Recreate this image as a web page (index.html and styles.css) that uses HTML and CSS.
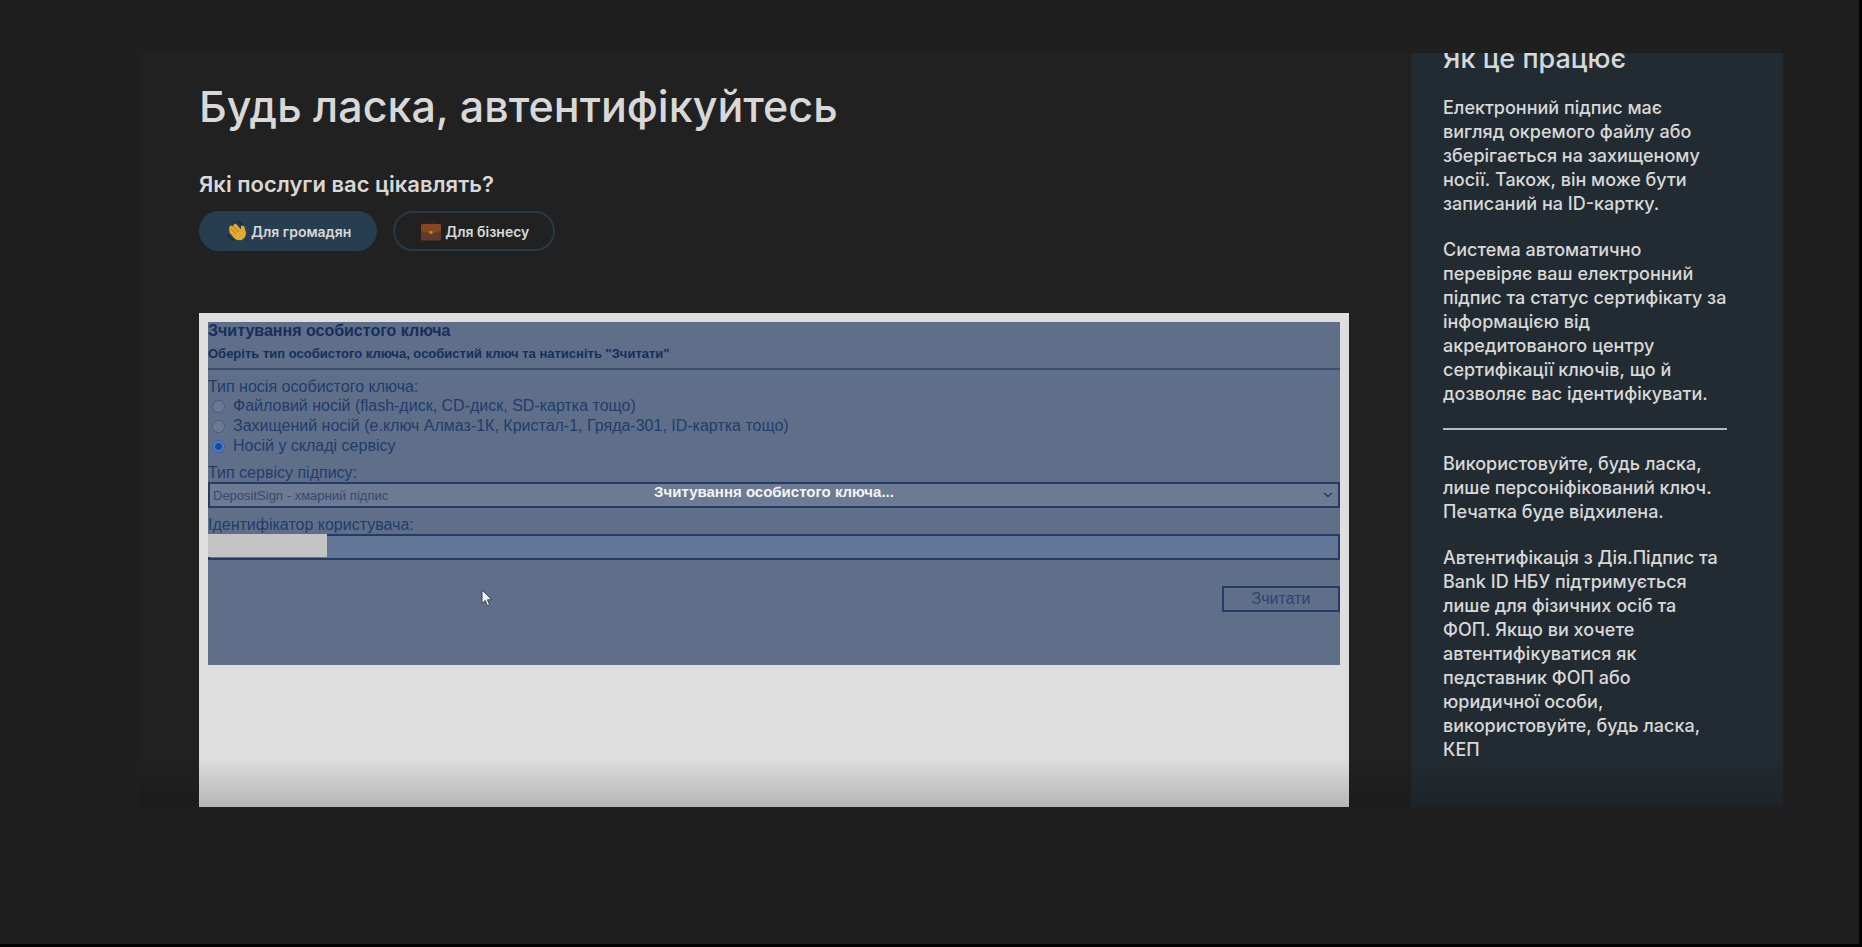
FILE: index.html
```html
<!DOCTYPE html>
<html lang="uk">
<head>
<meta charset="utf-8">
<title>Будь ласка, автентифікуйтесь</title>
<link rel="stylesheet" href="styles.css">
</head>
<body>
<div class="stage">
  <main class="main">
    <h1 class="title">Будь ласка, автентифікуйтесь</h1>
    <h2 class="question">Які послуги вас цікавлять?</h2>
    <div class="pills">
      <button class="pill pill-active" type="button">
        <svg class="pill-icon" viewBox="0 0 20 20" aria-hidden="true">
          <path d="M2.500 5.500Q4 3.500 5.500 5.500L7 3.500Q8.500 2 10 4L14 8.500V5.500Q15.500 3.500 17.500 6L19 12Q19 17 14.500 19 10 20 7 17L2.500 11.500Q1.500 8 2.500 5.500Z" fill="#e2ab2d"/>
          <path d="M4 7.500 9 13M6.500 5.500 11.500 11" stroke="#b27a1c" stroke-width="1" fill="none"/>
          <path d="M10.500 1Q14 .8 15.500 3.500M1 14Q2 17.500 6 18.500" stroke="#0e3444" stroke-width="1.800" fill="none" stroke-linecap="round"/>
        </svg>
        <span>Для громадян</span>
      </button>
      <button class="pill" type="button">
        <svg class="pill-icon" viewBox="0 0 20 20" aria-hidden="true">
          <path d="M6.500 4V2Q6.500 1 7.500 1h5q1 0 1 1v2" fill="none" stroke="#3c2219" stroke-width="1.600"/>
          <rect x="0" y="3" width="20" height="16.500" rx="1.500" fill="#5f392b"/>
          <path d="M0 4.500Q0 3 1.500 3h17Q20 3 20 4.500v5q-4 2.500-10 2.500T0 9.500Z" fill="#87471f"/>
          <rect x="8.500" y="10" width="3" height="3" rx="1" fill="#d08a1c"/>
        </svg>
        <span>Для бізнесу</span>
      </button>
    </div>

    <section class="card">
      <form class="panel">
        <h3 class="panel-title">Зчитування особистого ключа</h3>
        <p class="panel-hint">Оберіть тип особистого ключа, особистий ключ та натисніть "Зчитати"</p>
        <fieldset class="group">
          <legend class="label">Тип носія особистого ключа:</legend>
          <label class="option"><input class="radio" type="radio" name="media"><span>Файловий носій (flash-диск, CD-диск, SD-картка тощо)</span></label>
          <label class="option"><input class="radio" type="radio" name="media"><span>Захищений носій (е.ключ Алмаз-1К, Кристал-1, Гряда-301, ID-картка тощо)</span></label>
          <label class="option"><input class="radio" type="radio" name="media" checked><span>Носій у складі сервісу</span></label>
        </fieldset>
        <label class="label" for="service">Тип сервісу підпису:</label>
        <div class="field">
          <select class="control select" id="service"><option>DepositSign - хмарний підпис</option></select>
          <svg class="chevron" viewBox="0 0 10 6" aria-hidden="true"><path d="M1 1 5 4.500 9 1" fill="none" stroke="#2a3d60" stroke-width="1.600"/></svg>
          <strong class="status" role="status">Зчитування особистого ключа...</strong>
        </div>
        <label class="label" for="user">Ідентифікатор користувача:</label>
        <div class="field">
          <input class="control" id="user" type="text">
          <span class="mask"></span>
        </div>
        <button class="submit" type="button">Зчитати</button>
        <svg class="cursor" viewBox="0 0 12 18" aria-hidden="true"><path d="M1 1v13.500l3.200-3 2.200 5.200 2.200-1-2.200-4.900H11Z" fill="#f4f4f6" stroke="#33415c" stroke-width="1"/></svg>
      </form>
    </section>
  </main>

  <aside class="side">
    <h2 class="side-title">Як це працює</h2>
    <p class="side-text">Електронний підпис має<br>вигляд окремого файлу або<br>зберігається на захищеному<br>носії. Також, він може бути<br>записаний на ID-картку.</p>
    <p class="side-text">Система автоматично<br>перевіряє ваш електронний<br>підпис та статус сертифікату за<br>інформацією від<br>акредитованого центру<br>сертифікації ключів, що й<br>дозволяє вас ідентифікувати.</p>
    <hr class="rule">
    <p class="side-text">Використовуйте, будь ласка,<br>лише персоніфікований ключ.<br>Печатка буде відхилена.</p>
    <p class="side-text">Автентифікація з Дія.Підпис та<br>Bank ID НБУ підтримується<br>лише для фізичних осіб та<br>ФОП. Якщо ви хочете<br>автентифікуватися як<br>педставник ФОП або<br>юридичної особи,<br>використовуйте, будь ласка,<br>КЕП</p>
  </aside>
  <div class="shade"></div>
</div>
</body>
</html>
```
FILE: styles.css
```css
* { box-sizing: border-box; }

html { height: 100%; }

body {
  margin: 0;
  height: 100%;
  padding: 53px 76px 137px 139px;
  background: #1f1f1f;
  border-right: 3px solid #030303;
  border-bottom: 3px solid #030303;
  font-family: Inter, "Noto Sans", sans-serif;
  color: #d8d8d8;
  overflow: hidden;
}

h1, h2, h3, p { margin: 0; }

.stage {
  position: relative;
  display: flex;
  height: 100%;
  background: #212121;
  overflow: hidden;
}

.main {
  flex: 1;
  display: flex;
  flex-direction: column;
  padding: 27px 62px 0 60px;
}

.title {
  font-size: 43px;
  line-height: 52px;
  font-weight: 500;
}

.question {
  margin-top: 38px;
  font-size: 22px;
  line-height: 28px;
  font-weight: 600;
}

.pills {
  display: flex;
  gap: 16px;
  margin-top: 13px;
}

.pill {
  display: flex;
  align-items: center;
  gap: 4px;
  height: 40px;
  padding: 0 24px 0 26px;
  border: 2px solid #263a48;
  border-radius: 20px;
  background: transparent;
  color: #d8d8d8;
  font-family: inherit;
  font-size: 14px;
  font-weight: 600;
}

.pill-active { background: #263e4f; border-color: #263e4f; }

.pill-icon { width: 20px; height: 20px; }

.card {
  flex: 1;
  margin-top: 62px;
  padding: 9px 9px 0;
  background: #dedede;
}

.panel {
  position: relative;
  display: flex;
  flex-direction: column;
  height: 343px;
  background: #5f6f89;
  color: #223c69;
  font-family: "Liberation Sans", Arial, sans-serif;
  font-size: 16px;
}

.panel-title {
  font-size: 16px;
  line-height: 18px;
  color: #162e5c;
}

.panel-hint {
  padding: 7px 0;
  border-bottom: 2px solid #3b4f73;
  font-size: 13px;
  line-height: 14px;
  font-weight: 700;
  color: #162e5c;
}

.group {
  margin: 7px 0;
  padding: 0;
  border: 0;
}

.label {
  padding: 0;
  line-height: 19px;
}

.option {
  display: flex;
  align-items: center;
  gap: 8px;
  padding-left: 4px;
  line-height: 20px;
}

.radio {
  appearance: none;
  width: 13px;
  height: 13px;
  margin: 0;
  border: 1px solid #465a80;
  border-radius: 50%;
  background: #6c7a93;
}

.radio:checked {
  border-color: #2b62b5;
  background: radial-gradient(circle, #0b4cae 3px, #5a7cb4 4px);
}

.field { position: relative; display: flex; margin-bottom: 7px; }

.control {
  width: 100%;
  height: 26px;
  padding: 0 3px;
  border: 2px solid #253b66;
  border-radius: 0;
  background: #627696;
  color: #34496f;
  font-family: inherit;
  font-size: 13px;
}

.select { appearance: none; background: #6c7a93; }

.chevron {
  position: absolute;
  right: 7px;
  top: 10px;
  width: 10px;
  height: 6px;
}

.status {
  position: absolute;
  inset: 0;
  font-size: 15px;
  line-height: 20px;
  text-align: center;
  color: #f4f4f6;
}

.mask {
  position: absolute;
  left: 0;
  top: 0;
  width: 119px;
  height: 23px;
  background: #c4c4c4;
}

.submit {
  align-self: flex-end;
  width: 118px;
  height: 26px;
  margin-top: 19px;
  padding: 0;
  border: 2px solid #253b66;
  background: transparent;
  color: #2c4570;
  font-family: inherit;
  font-size: 16px;
}

.cursor {
  position: absolute;
  left: 273px;
  top: 267px;
  width: 12px;
  height: 18px;
}

.side {
  width: 372px;
  padding: 0 56px 0 32px;
  background: #232b32;
}

.side-title {
  margin: -6px 0 25px;
  font-size: 27px;
  line-height: 24px;
  font-weight: 500;
}

.side-text {
  margin-bottom: 22px;
  font-size: 18px;
  line-height: 24px;
  font-weight: 500;
  white-space: nowrap;
}

.rule {
  height: 2px;
  margin: 0 0 22px;
  border: 0;
  background: #b4bbbe;
}

.shade {
  position: absolute;
  inset: auto 0 0;
  height: 50px;
  background: linear-gradient(rgba(0, 0, 0, 0), rgba(0, 0, 0, 0.18));
}
```
